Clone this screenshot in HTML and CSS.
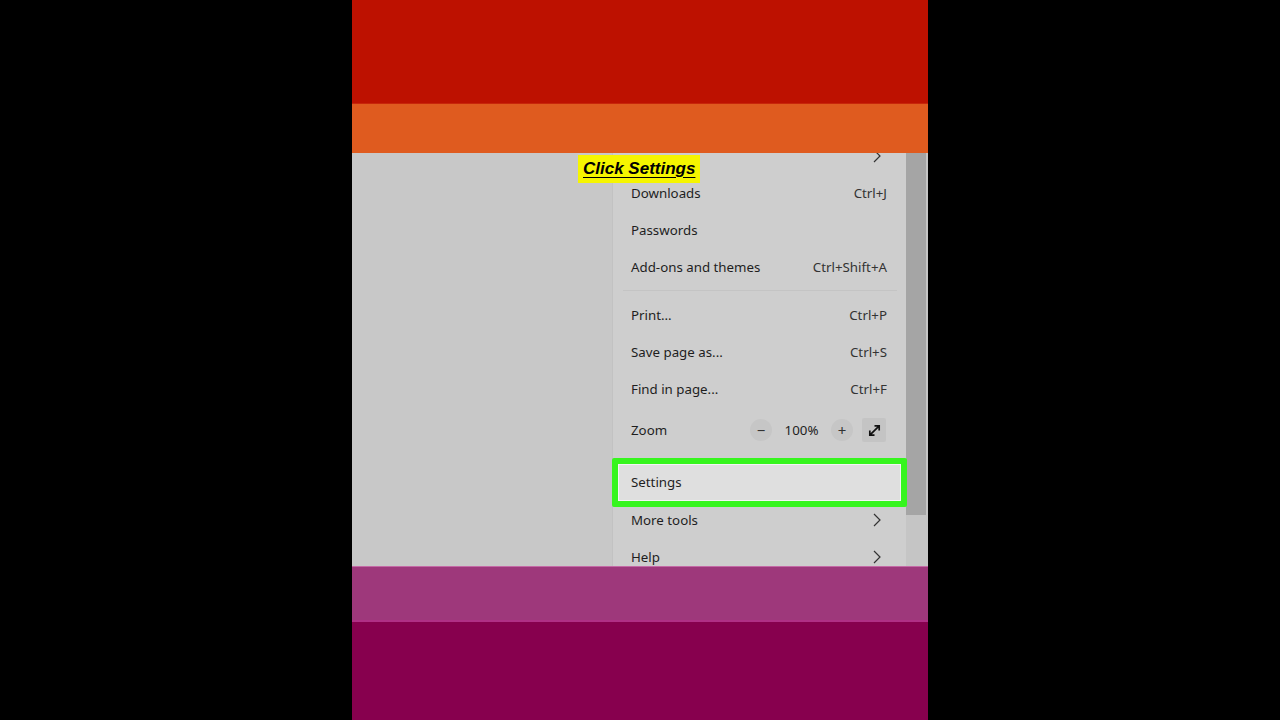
FILE: index.html
```html
<!DOCTYPE html>
<html lang="en">
<head>
    <meta charset="UTF-8">
    <title>Click Settings</title>
    <link rel="stylesheet" href="styles.css">
</head>
<body>
    <div class="frame">
        <div class="band red"></div>
        <div class="band orange"></div>
        <div class="view">
            <div class="blank"></div>
            <div class="menu">
                <div class="row"><span></span><svg class="chev" viewBox="0 0 8 14"><polyline points="1,1 7,7 1,13"/></svg></div>
                <div class="row"><span>Downloads</span><span class="key">Ctrl+J</span></div>
                <div class="row"><span>Passwords</span></div>
                <div class="row"><span>Add-ons and themes</span><span class="key">Ctrl+Shift+A</span></div>
                <div class="sep"></div>
                <div class="row"><span>Print...</span><span class="key">Ctrl+P</span></div>
                <div class="row"><span>Save page as...</span><span class="key">Ctrl+S</span></div>
                <div class="row"><span>Find in page...</span><span class="key">Ctrl+F</span></div>
                <div class="row zoom">
                    <span>Zoom</span>
                    <div class="zoom-ctrl">
                        <span class="zbtn">&minus;</span>
                        <span class="pct">100%</span>
                        <span class="zbtn">+</span>
                        <span class="zbtn full"><svg viewBox="0 0 16 16"><path d="M3 13 L13 3 M8 3 H13 V8 M3 8 V13 H8"/></svg></span>
                    </div>
                </div>
                <div class="sep hidden"></div>
                <div class="row settings"><span>Settings</span></div>
                <div class="row"><span>More tools</span><svg class="chev" viewBox="0 0 8 14"><polyline points="1,1 7,7 1,13"/></svg></div>
                <div class="row"><span>Help</span><svg class="chev" viewBox="0 0 8 14"><polyline points="1,1 7,7 1,13"/></svg></div>
            </div>
            <div class="scroll"><div class="thumb"></div></div>
        </div>
        <div class="band pink"></div>
        <div class="band plum"></div>
        <div class="label">Click Settings</div>
    </div>
</body>
</html>
```

FILE: styles.css
```css
*{
    margin: 0;
    padding: 0;
    box-sizing: border-box;
}

body{
    background: #000;
    height: 720px;
    overflow: hidden;
}

.frame{
    position: relative;
    display: flex;
    flex-direction: column;
    width: 576px;
    height: 720px;
    margin: 0 auto;
}

.band{
    flex: none;
}

.red{
    height: 104px;
    background: #bd1100;
    border-bottom: 1px solid #c8260a;
}

.orange{
    height: 49px;
    background: #df5b1f;
}

.view{
    display: flex;
    height: 413px;
    overflow: hidden;
    background: #c8c8c8;
}

.blank{
    width: 260px;
}

.menu{
    width: 294px;
    margin-top: -16px;
    padding: 0 9px 0 10px;
    background: #cecece;
    border-left: 1px solid #c2c2c2;
    font-family: "Noto Sans", "Open Sans", sans-serif;
    font-size: 13.3px;
    color: #1e1e1e;
}

.row{
    display: flex;
    align-items: center;
    justify-content: space-between;
    height: 37px;
    padding: 0 10px 0 8px;
}

.key{
    color: #333;
}

.chev{
    width: 8px;
    height: 14px;
    margin-right: 6px;
    fill: none;
    stroke: #333;
    stroke-width: 1.2;
}

.sep{
    height: 11px;
    border-bottom: 1px solid #c4c4c4;
    position: relative;
    top: -5px;
}

.sep.hidden{
    height: 10px;
    border: none;
}

.zoom{
    height: 46px;
}

.zoom-ctrl{
    display: flex;
    align-items: center;
    margin-right: 1px;
}

.zbtn{
    display: flex;
    align-items: center;
    justify-content: center;
    width: 22px;
    height: 22px;
    border-radius: 50%;
    background: #c6c6c6;
    font-size: 15px;
    color: #333;
}

.pct{
    width: 59px;
    text-align: center;
}

.full{
    width: 24px;
    height: 24px;
    margin-left: 9px;
    border-radius: 2px;
    background: #c4c4c4;
}

.full svg{
    width: 15px;
    height: 15px;
    fill: none;
    stroke: #111;
    stroke-width: 1.8;
}

.settings{
    position: relative;
    z-index: 0;
    height: 38px;
}

.settings:after{
    content: '';
    position: absolute;
    top: -5px;
    right: -10px;
    bottom: -6px;
    left: -11px;
    z-index: -1;
    border: 6px solid #36f51e;
    border-radius: 2px;
    background: #dfdfdf;
    box-shadow: inset 0 0 0 1px #f4f4f4;
}

.scroll{
    width: 22px;
    background: #c5c5c5;
}

.thumb{
    width: 20px;
    height: 362px;
    background: #a5a5a5;
}

.pink{
    height: 56px;
    background: #9e387b;
    border-top: 1px solid #c46aa6;
    border-bottom: 2px solid #b02f85;
}

.plum{
    flex: 1;
    background: #87004e;
}

.label{
    position: absolute;
    left: 226px;
    top: 155px;
    height: 28px;
    padding: 0 5px;
    background: #f6f500;
    font-family: "Liberation Sans", Arial, sans-serif;
    font-size: 17px;
    font-weight: bold;
    font-style: italic;
    line-height: 28px;
    color: #000;
    text-decoration: underline;
    text-underline-offset: 3px;
}
```
